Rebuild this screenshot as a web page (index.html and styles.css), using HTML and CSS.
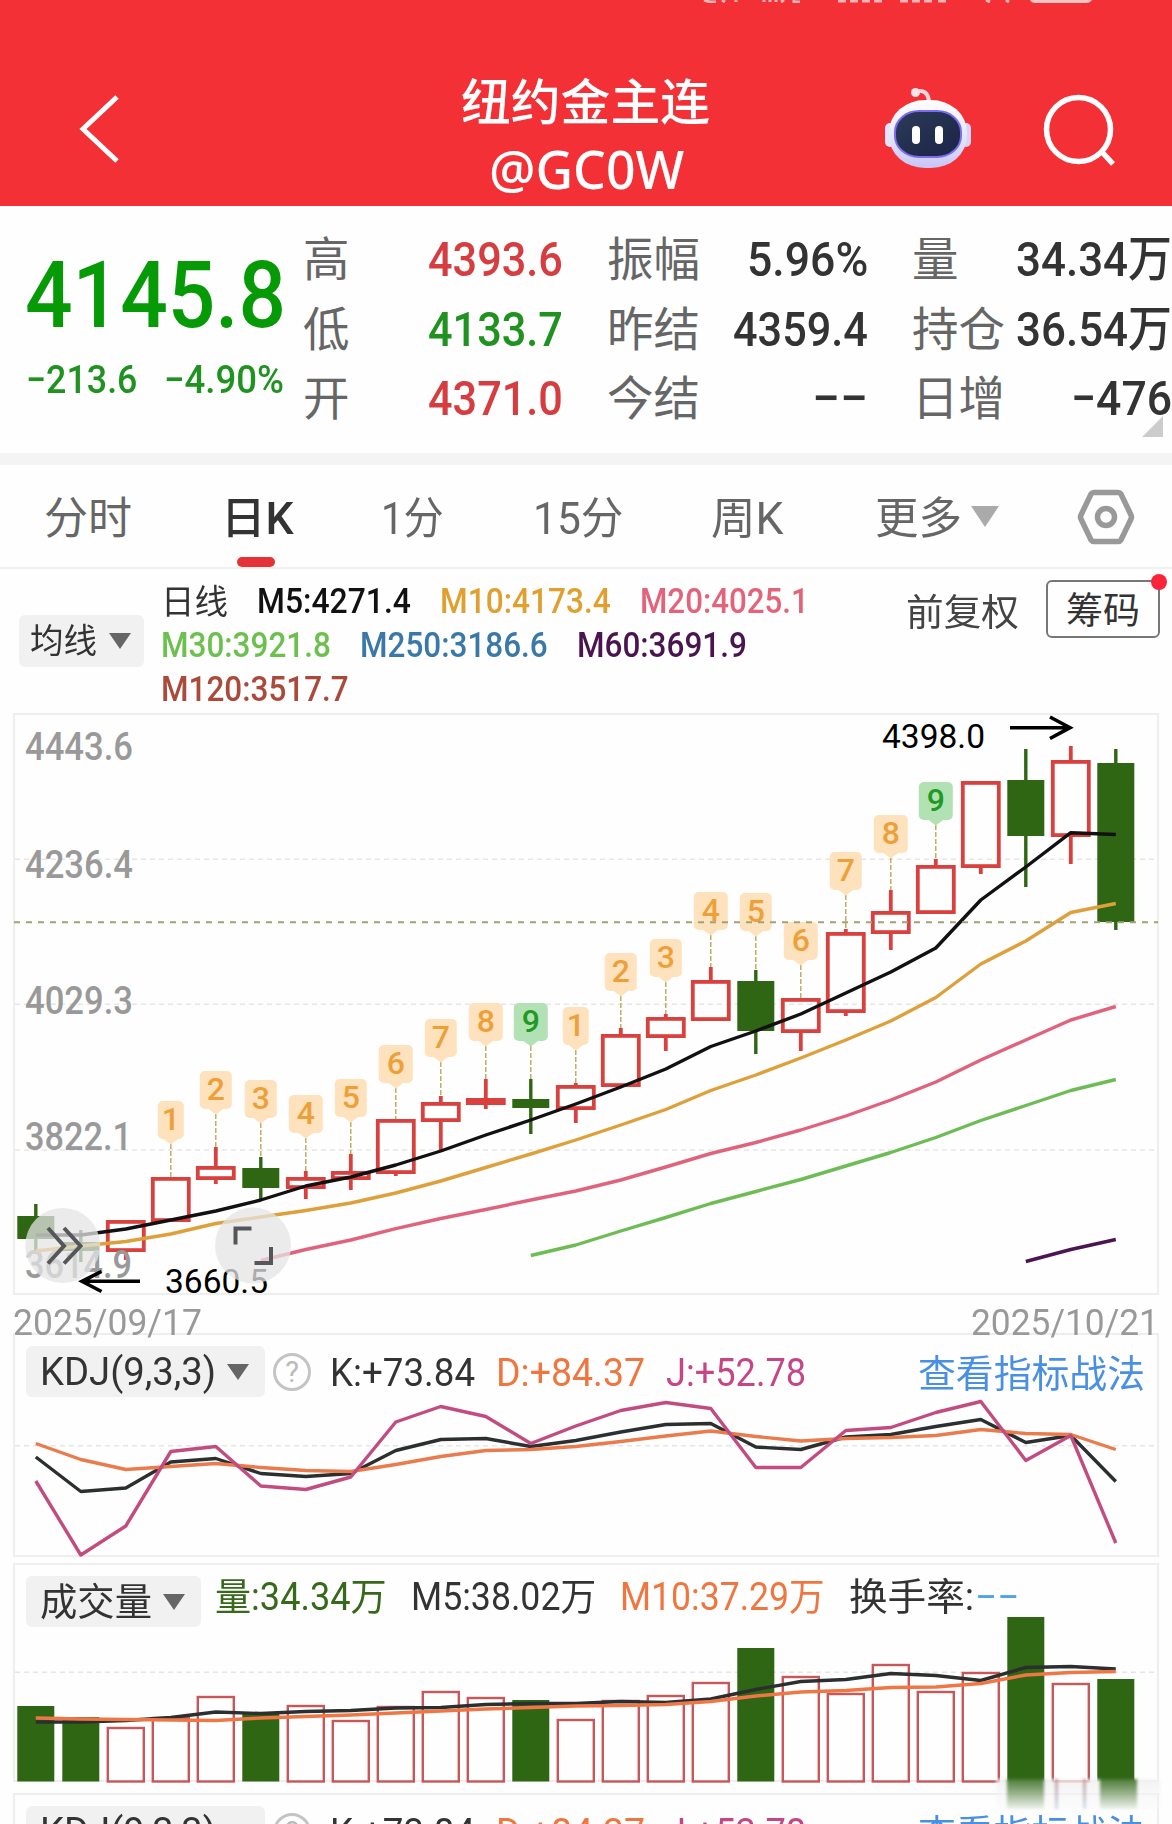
FILE: index.html
```html
<!DOCTYPE html>
<html lang="zh-CN">
<head>
    <meta charset="UTF-8">
    <meta name="viewport" content="width=device-width, initial-scale=1.0">
    <title>纽约金主连 @GC0W</title>
    <link rel="stylesheet" href="styles.css">
</head>
<body>

    <header class="header">
        <svg class="status-bar" width="420" height="3" viewBox="0 0 420 3">
            <path d="M4 0l6 2h6M22 0l3 2M36 0v2M64 0v2M70 0v2M76 0v2M84 0l-3 2M94 0v2h6M138 1h8M150 1h8M162 1h8M174 1h8M200 1h8M212 1h8M224 1h8M238 1h8M286 0l4 2M306 0l3 2" />
            <path class="battery" d="M330 0h62q-2 3-6 3h-50q-5 0-6-3z" />
        </svg>
        <svg class="back-icon" width="44" height="72" viewBox="0 0 44 72">
            <path d="M40 4L6 36L40 68" />
        </svg>
        <div class="title">
            <div class="title-name"><span class="fit" data-w="249">纽约金主连</span></div>
            <div class="title-code"><span class="fit" data-w="195">@GC0W</span></div>
        </div>
        <svg class="robot-icon" width="90" height="84" viewBox="882 86 90 84">
            <defs>
                <linearGradient id="head" x1="0" y1="0" x2="0" y2="1">
                    <stop offset="0" stop-color="#ffffff" />
                    <stop offset="0.55" stop-color="#e4e5fb" />
                    <stop offset="1" stop-color="#c8c4f6" />
                </linearGradient>
                <linearGradient id="face" x1="0" y1="0" x2="1" y2="1">
                    <stop offset="0" stop-color="#2c3a58" />
                    <stop offset="1" stop-color="#1b2447" />
                </linearGradient>
            </defs>
            <path d="M914 92q13-4 14 10" fill="none" stroke="#f6d5dc" stroke-width="4" />
            <circle cx="914.500" cy="92.500" r="4.500" fill="#fbe4ea" />
            <rect x="884" y="123" width="10" height="24" rx="5" fill="#e6e2fb" />
            <rect x="960" y="123" width="10" height="24" rx="5" fill="#d8d2f6" />
            <rect x="888" y="100" width="78" height="68" rx="36" ry="32" fill="url(#head)" />
            <rect x="894" y="111" width="66" height="46" rx="24" ry="21" fill="url(#face)" stroke="#7b6df0" stroke-width="2" />
            <rect x="911" y="126" width="8" height="18" rx="4" fill="#fff" />
            <rect x="934" y="126" width="8" height="18" rx="4" fill="#fff" />
        </svg>
        <svg class="search-icon" width="78" height="78" viewBox="1040 92 78 78">
            <circle cx="1077.500" cy="129.500" r="32" />
            <path d="M1101 152L1112 164" />
        </svg>
    </header>

    <section class="quote">
        <div class="price-block">
            <div class="price"><span class="fit" data-w="261">4145.8</span></div>
            <div class="change">
                <span class="fit" data-w="111">−213.6</span>
                <span class="fit" data-w="120">−4.90%</span>
            </div>
        </div>
        <div class="stats">
            <div class="stat"><span>高</span><b class="fit up" data-w="135">4393.6</b></div>
            <div class="stat"><span>振幅</span><b class="fit" data-w="121">5.96%</b></div>
            <div class="stat"><span>量</span><b class="fit" data-w="156">34.34万</b></div>
            <div class="stat"><span>低</span><b class="fit down" data-w="135">4133.7</b></div>
            <div class="stat"><span>昨结</span><b class="fit" data-w="135">4359.4</b></div>
            <div class="stat"><span>持仓</span><b class="fit" data-w="156">36.54万</b></div>
            <div class="stat"><span>开</span><b class="fit up" data-w="135">4371.0</b></div>
            <div class="stat"><span>今结</span><b class="fit" data-w="56">−−</b></div>
            <div class="stat"><span>日增</span><b class="fit" data-w="101">−476</b></div>
        </div>
        <div class="corner"></div>
    </section>

    <nav class="tabs">
        <div class="tab"><span class="fit" data-w="88">分时</span></div>
        <div class="tab active"><span class="fit" data-w="73">日K</span></div>
        <div class="tab"><span class="fit" data-w="63">1分</span></div>
        <div class="tab"><span class="fit" data-w="90">15分</span></div>
        <div class="tab"><span class="fit" data-w="73">周K</span></div>
        <div class="tab more"><span class="fit" data-w="87">更多</span><i class="arrow"></i></div>
        <svg class="setting-icon" width="60" height="58" viewBox="0 0 60 58">
            <path d="M18 4.500H42Q44 4.500 45 6L55 27Q56 29 55 31L45 52Q44 53.500 42 53.500H18Q16 53.500 15 52L5 31Q4 29 5 27L15 6Q16 4.500 18 4.500Z" />
            <circle cx="30" cy="29" r="8.500" />
        </svg>
    </nav>

    <section class="ma-bar">
        <div class="select ma-select"><span class="fit" data-w="67">均线</span><i class="arrow"></i></div>
        <div class="ma-list">
            <span class="fit c-day" data-w="67">日线</span>
            <span class="fit c-m5" data-w="154">M5:4271.4</span>
            <span class="fit c-m10" data-w="171">M10:4173.4</span>
            <span class="fit c-m20" data-w="169">M20:4025.1</span>
            <span class="fit c-m30" data-w="170">M30:3921.8</span>
            <span class="fit c-m250" data-w="188">M250:3186.6</span>
            <span class="fit c-m60" data-w="170">M60:3691.9</span>
            <span class="fit c-m120" data-w="188">M120:3517.7</span>
        </div>
        <div class="adjust"><span class="fit" data-w="113">前复权</span></div>
        <div class="chips"><span class="fit" data-w="74">筹码</span><i class="dot"></i></div>
    </section>

    <section class="panel k-panel">
        <svg id="k-chart" width="1142" height="578" viewBox="15 715 1142 578"></svg>
    </section>

    <div class="dates">
        <span class="fit" data-w="189">2025/09/17</span>
        <span class="fit" data-w="188">2025/10/21</span>
    </div>

    <section class="panel kdj-panel">
        <svg id="kdj-chart" width="1142" height="220" viewBox="15 1335 1142 220"></svg>
        <div class="panel-head">
            <div class="select kdj-select"><span class="fit" data-w="176">KDJ(9,3,3)</span><i class="arrow"></i></div>
            <i class="help">?</i>
            <span class="fit" data-w="145">K:+73.84</span>
            <span class="fit c-d" data-w="149">D:+84.37</span>
            <span class="fit c-j" data-w="140">J:+52.78</span>
            <a class="fit link" data-w="227">查看指标战法</a>
        </div>
    </section>

    <section class="panel vol-panel">
        <svg id="vol-chart" width="1142" height="215" viewBox="15 1565 1142 215"></svg>
        <div class="panel-head vol-head">
            <div class="select vol-select"><span class="fit" data-w="112">成交量</span><i class="arrow"></i></div>
            <span class="fit c-vol" data-w="172">量:34.34万</span>
            <span class="fit" data-w="185">M5:38.02万</span>
            <span class="fit c-d" data-w="205">M10:37.29万</span>
            <span class="fit" data-w="125">换手率:</span>
            <span class="fit c-rate" data-w="44">−−</span>
        </div>
    </section>

    <section class="panel last-panel">
        <div class="panel-head">
            <div class="select kdj-select"><span class="fit" data-w="176">KDJ(9,3,3)</span><i class="arrow"></i></div>
            <i class="help">?</i>
            <span class="fit" data-w="145">K:+73.84</span>
            <span class="fit c-d" data-w="149">D:+84.37</span>
            <span class="fit c-j" data-w="140">J:+52.78</span>
            <a class="fit link" data-w="227">查看指标战法</a>
        </div>
    </section>

    <div class="smear">
        <i></i><i class="g"></i><i></i><i class="r"></i><i></i><i class="r"></i><i class="g"></i><i></i>
    </div>

    <script src="chart.js"></script>
</body>
</html>
```
FILE: styles.css
```css
* {
    box-sizing: border-box;
}

body {
    position: relative;
    width: 1172px;
    height: 1824px;
    margin: 0;
    overflow: hidden;
    background: #fefefe;
    color: #333;
    font-family: Roboto, "Noto Sans CJK SC", sans-serif;
}

i {
    font-style: normal;
}

/* text squeezed to the width given in data-w */
.fit {
    display: block;
    width: max-content;
    flex-shrink: 0;
    white-space: nowrap;
    transform-origin: 0 50%;
}

/* header */
.header {
    position: relative;
    display: flex;
    align-items: flex-start;
    height: 206px;
    background: #f23035;
    color: #fff;
}

.header svg {
    flex-shrink: 0;
    fill: none;
    stroke: #fff;
}

.header .status-bar {
    position: absolute;
    top: 0;
    left: 700px;
    stroke: #f9b3b5;
    stroke-width: 3;
}

.status-bar .battery {
    fill: #f7c4c6;
    stroke: none;
}

.back-icon {
    margin: 93px 0 0 77px;
    stroke-width: 5;
}

.title {
    width: 260px;
    margin: 69px 0 0 340px;
    font-weight: 500;
}

.title-name,
.title-code {
    display: flex;
    height: 69px;
    line-height: 69px;
    font-size: 49px;
}

.title-code {
    height: 64px;
    padding-left: 28px;
    font-family: "Noto Sans", sans-serif;
    font-size: 52px;
    font-weight: 500;
    line-height: 62px;
}

.header .robot-icon {
    margin: 86px 0 0 162px;
    stroke: none;
}

.search-icon {
    margin: 92px 0 0 68px;
    stroke-width: 5.5;
}

/* quote */
.quote {
    position: relative;
    display: flex;
    height: 259px;
    border-bottom: 12px solid #f4f4f4;
    background: #fefefe;
}

.price-block {
    width: 303px;
    padding: 40px 0 0 25px;
    color: #079a07;
    font-weight: 500;
}

.price {
    height: 100px;
    line-height: 100px;
    font-size: 93px;
    font-weight: 500;
}

.change {
    display: flex;
    justify-content: space-between;
    width: 259px;
    height: 70px;
    padding-left: 1px;
    line-height: 69px;
    font-size: 39px;
    color: #1f9220;
}

.stats {
    display: grid;
    grid-template-columns: 260px 261px 260px;
    grid-auto-rows: 69.6px;
    column-gap: 44px;
    padding-top: 18px;
}

.stat {
    display: flex;
    justify-content: space-between;
    line-height: 71px;
    font-size: 46.5px;
    white-space: nowrap;
}

.stat span {
    color: #666;
    line-height: 73px;
}

.stat b {
    font-size: 49px;
    font-weight: 500;
}

.up {
    color: #d63d40;
}

.down {
    color: #1f9220;
}

.corner {
    position: absolute;
    right: 9px;
    bottom: 16px;
    border-bottom: 21px solid #ccc;
    border-left: 21px solid transparent;
}

/* period tabs */
.tabs {
    display: grid;
    grid-template-columns: 177px 160px 152px 178px 164px 201px 60px;
    grid-template-rows: 102px;
    height: 104px;
    padding-left: 44px;
    border-bottom: 2px solid #f0f0f0;
    font-size: 44px;
    line-height: 108px;
    color: #666;
}

.tab {
    display: flex;
}

.active {
    position: relative;
    color: #333;
    font-weight: 500;
}

.active::after {
    content: "";
    position: absolute;
    bottom: 0;
    left: 16px;
    width: 38px;
    height: 10px;
    border-radius: 5px;
    background: #e43237;
}

.arrow {
    border-top: 16px solid #666;
    border-right: 11px solid transparent;
    border-left: 11px solid transparent;
}

.more .arrow {
    align-self: center;
    margin-left: 9px;
    border-top: 21px solid #aaa;
    border-right-width: 14px;
    border-left-width: 14px;
}

.setting-icon {
    margin-top: 23px;
    fill: none;
    stroke: #999;
    stroke-width: 5.5;
}

/* moving averages */
.ma-bar {
    display: flex;
    height: 144px;
    padding-left: 19px;
}

.select {
    display: flex;
    align-items: center;
    flex-shrink: 0;
    border-radius: 6px;
    background: #f1f1f1;
}

.ma-select {
    width: 125px;
    height: 52px;
    margin-top: 46px;
    padding-left: 11px;
    gap: 12px;
    font-size: 34px;
    line-height: 56px;
}

.ma-list {
    display: flex;
    flex-wrap: wrap;
    column-gap: 29px;
    align-content: flex-start;
    width: 700px;
    margin: 11px 0 0 17px;
    font-size: 35px;
    font-weight: 500;
    line-height: 44px;
}

.ma-list .c-day {
    font-size: 34px;
    font-weight: 400;
}

.c-m5 { color: #111; }
.c-m10 { color: #e0a030; }
.c-m20 { color: #e3647a; }
.c-m30 { color: #6cc04e; }
.c-m250 { color: #3a78a8; }
.c-m60 { color: #4a154f; }
.c-m120 { color: #a94a3a; }

.adjust {
    margin-left: 45px;
    line-height: 90px;
    font-size: 37px;
    color: #444;
}

.chips {
    position: relative;
    width: 114px;
    height: 58px;
    margin: 11px 0 0 27px;
    padding-left: 18px;
    border: 2px solid #777;
    border-radius: 6px;
    font-size: 37px;
    line-height: 60px;
}

.dot {
    position: absolute;
    top: -8px;
    right: -9px;
    width: 16px;
    height: 16px;
    border-radius: 50%;
    background: #fa2438;
}

/* chart panels */
.panel {
    display: grid;
    width: 1146px;
    margin-left: 13px;
    border: 2px solid #eee;
}

.panel > * {
    grid-area: 1 / 1;
}

.panel svg {
    overflow: visible;
}

.k-panel {
    height: 582px;
}

.dates {
    display: flex;
    justify-content: space-between;
    height: 38px;
    padding: 0 13px;
    color: #999;
    font-size: 37px;
    line-height: 56px;
}

.kdj-panel {
    height: 224px;
}

.panel-head {
    position: relative;
    display: flex;
    align-items: flex-start;
    padding: 11px 12px 0 11px;
    font-size: 38px;
    line-height: 54px;
}

.panel-head .select {
    height: 51px;
    padding-left: 14px;
    gap: 11px;
    line-height: 58px;
}

.kdj-select {
    width: 239px;
}

.kdj-select + .help {
    width: 38px;
    height: 38px;
    margin: 7px 19px 0 8px;
    border: 3px solid #c4c4c4;
    border-radius: 50%;
    color: #bbb;
    font-size: 29px;
    line-height: 32px;
    text-align: center;
}

.panel-head .fit + .fit {
    margin-left: 21px;
}

.panel-head .fit + .link {
    margin-left: auto;
    color: #4a90e2;
    line-height: 57px;
}

.c-d { color: #f0763f; }
.c-j { color: #c54684; }
.c-vol { color: #37691a; }

.vol-panel {
    height: 219px;
    margin-top: 6px;
}

.vol-select {
    width: 175px;
    margin-right: 14px;
}

.vol-head > .fit {
    line-height: 42px;
}

.vol-head > .fit + .fit {
    margin-left: 24px;
}

.vol-head > .fit + .c-rate {
    margin-left: 1px;
    color: #4aa3e8;
}

.last-panel {
    height: 31px;
    margin-top: 11px;
    border-bottom: none;
}

/* blurred patch at the bottom corner */
.smear {
    position: absolute;
    top: 1779px;
    left: 996px;
    display: flex;
    width: 164px;
    height: 30px;
    background: linear-gradient(rgba(240, 240, 240, 0.85), rgba(250, 250, 250, 0.4));
    filter: blur(1.5px);
}

.smear i {
    width: 11px;
}

.smear .g {
    width: 37px;
    background: linear-gradient(#4d7d38, rgba(120, 160, 100, 0.1));
}

.smear .r {
    width: 3px;
    margin-right: 14px;
    background: linear-gradient(#c9a0a0, rgba(120, 150, 210, 0.3));
}

/* svg parts */
.grid {
    stroke: #e6e6e6;
    stroke-width: 1.6;
    stroke-dasharray: 5 4;
}

.line {
    fill: none;
    stroke-width: 3.4;
    stroke-linejoin: round;
}

.red {
    fill: none;
    stroke: #d9413f;
    stroke-width: 3.8;
}

.green {
    fill: #2f6613;
    stroke: #2f6613;
}

.vol-red {
    fill: none;
    stroke: #c8575a;
    stroke-width: 2.4;
}

.axis {
    fill: #999;
    font-size: 38px;
    font-weight: 500;
}

.extreme {
    fill: #000;
    font-size: 34px;
}

.black-arrow {
    fill: none;
    stroke: #000;
    stroke-width: 3.6;
}

.now {
    stroke: #a3a272;
    stroke-width: 2;
    stroke-dasharray: 6 6;
}

.tag {
    fill: #fde2bd;
}

.tag-text {
    fill: #eda03a;
    font-size: 32px;
    font-weight: 500;
    text-anchor: middle;
}

.tag-green {
    fill: #b2e2b4;
}

.tag-text-green {
    fill: #219a25;
}

.tag-line {
    stroke: #b8a24c;
    stroke-width: 1.3;
    stroke-dasharray: 5 2;
}

.round-btn {
    fill: rgba(228, 228, 228, 0.75);
}

.round-icon {
    fill: none;
    stroke: #55565a;
    stroke-width: 4;
}
```
FILE: chart.js
```js
// squeeze text to its data-w width
document.querySelectorAll('.fit').forEach(el => {
    const w = Number(el.dataset.w);
    const natural = el.offsetWidth;
    el.style.width = `${w}px`;
    el.style.transform = `scaleX(${w / natural})`;
});

const cx = i => 35.8 + i * 45;

// color, high, top, bottom, low
const candles = [
    ['g', 1204, 1216, 1239, 1250], ['g', 1230, 1242, 1251, 1262], ['r', 1220, 1220, 1252, 1260],
    ['r', 1177, 1177, 1222, 1222], ['r', 1147, 1166, 1180, 1184], ['g', 1157, 1168, 1188, 1200],
    ['r', 1171, 1177, 1189, 1199], ['r', 1154, 1171, 1180, 1190], ['r', 1119, 1119, 1174, 1176],
    ['r', 1096, 1102, 1122, 1152], ['r', 1079, 1098, 1105, 1109], ['g', 1079, 1099, 1108, 1134],
    ['r', 1083, 1085, 1110, 1123], ['r', 1028, 1034, 1087, 1087], ['r', 1014, 1017, 1038, 1051],
    ['r', 967, 980, 1021, 1021], ['g', 970, 981, 1031, 1054], ['r', 998, 998, 1033, 1051],
    ['r', 929, 932, 1013, 1016], ['r', 890, 911, 934, 950], ['r', 859, 865, 914, 914],
    ['r', 781, 781, 868, 874], ['g', 749, 780, 836, 887], ['r', 746, 760, 837, 864],
    ['g', 749, 763, 922, 930]
];

// candle index, number, top of the tag
const tags = [
    [3, 1, 1101], [4, 2, 1071], [5, 3, 1080], [6, 4, 1095], [7, 5, 1079], [8, 6, 1045],
    [9, 7, 1019], [10, 8, 1003], [11, 9, 1003], [12, 1, 1007], [13, 2, 953], [14, 3, 939],
    [15, 4, 892], [16, 5, 893], [17, 6, 922], [18, 7, 852], [19, 8, 815], [20, 9, 782]
];

const m5 = [1235, 1235, 1229, 1220, 1211, 1200, 1186, 1177, 1165, 1151, 1135, 1120, 1104, 1087, 1069, 1046.5, 1031, 1014, 993, 972, 948, 900, 867, 832.7, 834.5];
const m10 = [1251, 1246, 1241.5, 1234, 1223.5, 1217, 1210.5, 1203, 1193, 1181, 1167.5, 1154, 1140, 1125, 1109.5, 1090.5, 1075, 1058, 1040, 1021, 997.5, 964, 941, 912.5, 903.5];
const m20 = [1260.5, 1249.5, 1240, 1228.7, 1218.5, 1209.5, 1200, 1191, 1180, 1167, 1153.5, 1142.5, 1130, 1116, 1100, 1082, 1060, 1040, 1020, 1006.5];
const m30 = [1255.5, 1245, 1231, 1217.5, 1203.5, 1191.5, 1179.5, 1166, 1152.5, 1137.5, 1120.5, 1105.5, 1090.5, 1079.5];
const m60 = [1261.5, 1249.5, 1239.5];

const k = [1457, 1491.5, 1488, 1462, 1458.5, 1473.5, 1476.5, 1473.5, 1450.5, 1439.5, 1438.5, 1446.5, 1440.5, 1432, 1424.5, 1423.5, 1447, 1449.5, 1437, 1434.5, 1426.5, 1419.5, 1442.5, 1435.5, 1481.5];
const d = [1443.5, 1459.5, 1469.5, 1466.5, 1463.5, 1467.5, 1470.5, 1471.5, 1464.5, 1456.5, 1450.5, 1449.5, 1446.5, 1441.5, 1436, 1431, 1436.5, 1441, 1438.5, 1437.5, 1435.5, 1429.5, 1433.5, 1434.5, 1449.5];
const j = [1481, 1555, 1526, 1451.5, 1446.5, 1486, 1489.5, 1477, 1422, 1406.5, 1416.5, 1443.5, 1426, 1410.5, 1402.5, 1408.5, 1467.5, 1467.5, 1430.5, 1427.5, 1412.5, 1401.5, 1460.5, 1435.5, 1543];

const volumes = [1706, 1717, 1727, 1717, 1696, 1713, 1705, 1720, 1706, 1691, 1697, 1700, 1719, 1700, 1695, 1682, 1648, 1676, 1693, 1664, 1691, 1672, 1617, 1683, 1679];
const v5 = [1722, 1722, 1720.5, 1717.5, 1712, 1713.5, 1711.5, 1710.5, 1708, 1707.5, 1704.5, 1703.5, 1703.5, 1701.5, 1702.5, 1699, 1689.5, 1681.5, 1679.5, 1673.5, 1675.5, 1680.5, 1667.5, 1666.5, 1669];
const v10 = [1718, 1719, 1719.5, 1720, 1720.5, 1718, 1716.5, 1715, 1713, 1711, 1709, 1707.5, 1706, 1705.5, 1704.5, 1701.5, 1696, 1692, 1690.5, 1687.5, 1687, 1683.5, 1675, 1672.5, 1671.5];

function line(values, color) {
    const start = 25 - values.length;
    const points = values.map((y, i) => `${cx(start + i)},${y}`).join(' ');
    return `<polyline class="line" stroke="${color}" points="${points}" />`;
}

function grid(y) {
    return `<path class="grid" d="M15 ${y}H1157" />`;
}

function text(cls, x, y, width, value) {
    return `<text class="${cls}" x="${x}" y="${y}" textLength="${width}" lengthAdjust="spacingAndGlyphs">${value}</text>`;
}

function candle([color, high, top, bottom, low], i) {
    const x = cx(i);
    if (color === 'g') {
        return `<path class="green" stroke-width="3.4" d="M${x} ${high}V${low}" />` +
            `<rect class="green" stroke-width="0" x="${x - 18.5}" y="${top}" width="37" height="${bottom - top}" />`;
    }
    return `<path class="red" d="M${x} ${high}V${top + 1}M${x} ${bottom - 1}V${low}" />` +
        `<rect class="red" x="${x - 18}" y="${top + 1.9}" width="36" height="${bottom - top - 3.8}" />`;
}

function tag([i, n, y]) {
    const x = cx(i);
    const half = n === 1 ? 13 : [4, 6, 8, 9].includes(n) ? 17 : 16;
    const green = n === 9;
    return `<path class="tag-line" d="M${x} ${y + 43}V${candles[i][1]}" />` +
        `<rect class="tag ${green ? 'tag-green' : ''}" x="${x - half}" y="${y}" width="${half * 2}" height="38" rx="5" />` +
        `<path class="tag ${green ? 'tag-green' : ''}" d="M${x - 8} ${y + 37.5}L${x} ${y + 43.5}L${x + 8} ${y + 37.5}Z" />` +
        `<text class="tag-text ${green ? 'tag-text-green' : ''}" x="${x}" y="${y + 29}">${n}</text>`;
}

document.getElementById('k-chart').innerHTML =
    [859.3, 1004.3, 1150].map(grid).join('') +
    candles.map(candle).join('') +
    text('axis', 25, 759.5, 108, '4443.6') +
    text('axis', 25, 877.5, 108, '4236.4') +
    text('axis', 25, 1013.5, 108, '4029.3') +
    text('axis', 25, 1149.5, 107, '3822.1') +
    text('axis', 25, 1278, 107, '3614.9') +
    tags.map(tag).join('') +
    line(m5, '#111') + line(m10, '#dda03a') + line(m20, '#e0637d') + line(m30, '#6dbc55') + line(m60, '#4a1550') +
    '<path class="now" d="M14 922.3H1158" />' +
    text('extreme', 882, 747.5, 103, '4398.0') +
    '<path class="black-arrow" d="M1010 727.7H1070M1050 717L1070 727.7L1050 738.5" />' +
    text('extreme', 165, 1292.5, 103, '3660.5') +
    '<path class="black-arrow" d="M140 1281.3H82M101.500 1271.500L82 1281.300L101.500 1291.500" />' +
    '<circle class="round-btn" cx="62.700" cy="1245.500" r="37.500" />' +
    '<path class="round-icon" d="M48 1228L64 1246L48 1263.500M64 1228L80.500 1246L64 1263.500" />' +
    '<circle class="round-btn" cx="253" cy="1245.500" r="38" />' +
    '<path class="round-icon" d="M251.500 1228.500H235.500V1244.500M271 1247V1263H254.500" />';

document.getElementById('kdj-chart').innerHTML =
    grid(1445.7) + line(k, '#2b2f30') + line(d, '#e97b4c') + line(j, '#c24c80');

document.getElementById('vol-chart').innerHTML =
    grid(1672.3) +
    volumes.map((y, i) => candles[i][0] === 'g'
        ? `<rect class="green" stroke-width="0" x="${cx(i) - 18.5}" y="${y}" width="37" height="${1781.5 - y}" />`
        : `<rect class="vol-red" x="${cx(i) - 18}" y="${y + 1}" width="36" height="${1780.5 - y}" />`).join('') +
    line(v5, '#2b2f30') + line(v10, '#ee7745');
```
